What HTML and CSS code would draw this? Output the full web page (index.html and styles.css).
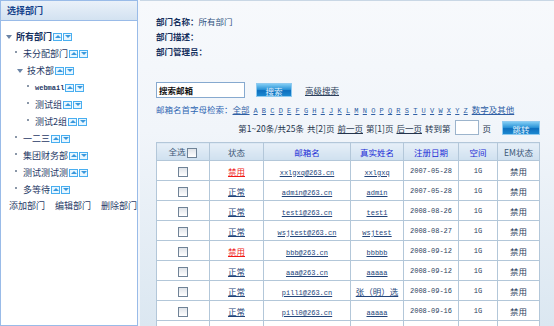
FILE: index.html
```html
<!DOCTYPE html>
<html lang="zh-CN">
<head>
    <meta charset="UTF-8">
    <title>部门邮箱管理</title>
    <link rel="stylesheet" href="styles.css">
</head>
<body>
<div class="page">
    <div class="side">
        <div class="side-head">选择部门</div>
        <ul class="tree">
            <li class="lv0"><span class="tri"></span><b>所有部门</b><span class="ud"><span class="up"></span><span class="dn"></span></span></li>
            <li class="lv1"><span class="dot"></span>未分配部门<span class="ud"><span class="up"></span><span class="dn"></span></span></li>
            <li class="lv1 open"><span class="tri"></span>技术部<span class="ud"><span class="up"></span><span class="dn"></span></span></li>
            <li class="lv2"><span class="dot"></span><span class="mono">webmail</span><span class="ud"><span class="up"></span><span class="dn"></span></span></li>
            <li class="lv2"><span class="dot"></span>测试组<span class="ud"><span class="up"></span><span class="dn"></span></span></li>
            <li class="lv2"><span class="dot"></span>测试2组<span class="ud"><span class="up"></span><span class="dn"></span></span></li>
            <li class="lv1"><span class="dot"></span>一二三<span class="ud"><span class="up"></span><span class="dn"></span></span></li>
            <li class="lv1"><span class="dot"></span>集团财务部<span class="ud"><span class="up"></span><span class="dn"></span></span></li>
            <li class="lv1"><span class="dot"></span>测试测试测<span class="ud"><span class="up"></span><span class="dn"></span></span></li>
            <li class="lv1"><span class="dot"></span>多等待<span class="ud"><span class="up"></span><span class="dn"></span></span></li>
        </ul>
        <div class="side-actions">
            <a>添加部门</a><a>编辑部门</a><a>删除部门</a>
        </div>
    </div>

    <div class="main">
        <div class="dept-info">
            <div><b>部门名称：</b>所有部门</div>
            <div><b>部门描述：</b></div>
            <div><b>部门管理员：</b></div>
        </div>

        <div class="search-bar">
            <span class="search-input">搜索邮箱</span>
            <span class="btn">搜索</span>
            <a class="adv">高级搜索</a>
        </div>

        <div class="letters">
            <span class="lbl">邮箱名首字母检索：</span><a>全部</a>
            <span class="abc"><a>A</a> <a>B</a> <a>C</a> <a>D</a> <a>E</a> <a>F</a> <a>G</a> <a>H</a> <a>I</a> <a>J</a> <a>K</a> <a>L</a> <a>M</a> <a>N</a> <a>O</a> <a>P</a> <a>Q</a> <a>R</a> <a>S</a> <a>T</a> <a>U</a> <a>V</a> <a>W</a> <a>X</a> <a>Y</a> <a>Z</a></span>
            <a>数字及其他</a>
        </div>

        <div class="pager">
            <span>第1~20条/共25条</span>
            <span>共[2]页</span>
            <a>前一页</a>
            <span>第[1]页</span>
            <a>后一页</a>
            <span>转到第</span>
            <span class="page-input"></span>
            <span>页</span>
            <span class="btn go">跳转</span>
        </div>

        <table class="mail-table">
            <colgroup>
                <col style="width:53px"><col style="width:54px"><col style="width:87px"><col style="width:53px"><col style="width:55px"><col style="width:39px"><col style="width:42px">
            </colgroup>
            <thead>
                <tr>
                    <th class="gray">全选 <span class="cb"></span></th>
                    <th class="gray">状态</th>
                    <th>邮箱名</th>
                    <th>真实姓名</th>
                    <th>注册日期</th>
                    <th>空间</th>
                    <th class="gray">EM状态</th>
                </tr>
            </thead>
            <tbody>
                <tr><td><span class="cb"></span></td><td><a class="red">禁用</a></td><td><a class="mono">xxlgxq@263.cn</a></td><td><a class="mono">xxlgxq</a></td><td class="mono">2007-05-28</td><td class="mono">1G</td><td>禁用</td></tr>
                <tr><td><span class="cb"></span></td><td><a>正常</a></td><td><a class="mono">admin@263.cn</a></td><td><a class="mono">admin</a></td><td class="mono">2007-05-28</td><td class="mono">1G</td><td>禁用</td></tr>
                <tr><td><span class="cb"></span></td><td><a>正常</a></td><td><a class="mono">test1@263.cn</a></td><td><a class="mono">test1</a></td><td class="mono">2008-08-26</td><td class="mono">1G</td><td>禁用</td></tr>
                <tr><td><span class="cb"></span></td><td><a>正常</a></td><td><a class="mono">wsjtest@263.cn</a></td><td><a class="mono">wsjtest</a></td><td class="mono">2008-08-27</td><td class="mono">1G</td><td>禁用</td></tr>
                <tr><td><span class="cb"></span></td><td><a class="red">禁用</a></td><td><a class="mono">bbb@263.cn</a></td><td><a class="mono">bbbbb</a></td><td class="mono">2008-09-12</td><td class="mono">1G</td><td>禁用</td></tr>
                <tr><td><span class="cb"></span></td><td><a>正常</a></td><td><a class="mono">aaa@263.cn</a></td><td><a class="mono">aaaaa</a></td><td class="mono">2008-09-12</td><td class="mono">1G</td><td>禁用</td></tr>
                <tr><td><span class="cb"></span></td><td><a>正常</a></td><td><a class="mono">pill1@263.cn</a></td><td><a>张（明）选</a></td><td class="mono">2008-09-16</td><td class="mono">1G</td><td>禁用</td></tr>
                <tr><td><span class="cb"></span></td><td><a>正常</a></td><td><a class="mono">pill0@263.cn</a></td><td><a class="mono">aaaaa</a></td><td class="mono">2008-09-16</td><td class="mono">1G</td><td>禁用</td></tr>
                <tr><td><span class="cb"></span></td><td><a>正常</a></td><td><a class="mono">pill2@263.cn</a></td><td><a class="mono">aaaaa</a></td><td class="mono">2008-09-16</td><td class="mono">1G</td><td>禁用</td></tr>
            </tbody>
        </table>
    </div>
</div>
</body>
</html>
```

FILE: styles.css
```css
html, body {
    margin: 0;
    padding: 0;
}

body {
    width: 554px;
    height: 326px;
    overflow: hidden;
    font-family: "Noto Sans CJK SC", "Liberation Sans", sans-serif;
    font-size: 9px;
    color: #1f3a66;
    background: #f4f7fb;
}

a {
    color: #23457a;
    text-decoration: underline;
    cursor: pointer;
}

.mono {
    font-family: "Liberation Mono", "Noto Sans CJK SC", monospace;
    font-size: 7px;
}

.page {
    display: flex;
    height: 326px;
}

/* left panel */
.side {
    width: 136px;
    flex: none;
    border: 1px solid #99bbe8;
    background: #fff;
}

.side-head {
    height: 19px;
    line-height: 19px;
    padding-left: 6px;
    font-weight: bold;
    color: #15428b;
    background: linear-gradient(#eaf1f9, #d3e2f1);
    border-bottom: 1px solid #99bbe8;
}

.tree {
    list-style: none;
    margin: 7px 0 0;
    padding: 0;
}

.tree li {
    height: 17px;
    display: flex;
    align-items: center;
    color: #1f3a66;
}

.tree .lv0 { padding-left: 5px; }
.tree .lv1 { padding-left: 14px; }
.tree .lv1.open { padding-left: 16px; }
.tree .lv2 { padding-left: 26px; }

.tree b {
    color: #15305e;
}

.tree .mono {
    font-weight: bold;
}

.tri {
    width: 0;
    height: 0;
    border-left: 3px solid transparent;
    border-right: 3px solid transparent;
    border-top: 4px solid #6b84a6;
    margin-right: 4px;
}

.dot {
    width: 2px;
    height: 2px;
    background: #8a97a8;
    margin: 0 6px 4px 0;
}

.ud {
    display: inline-flex;
    gap: 1px;
    margin-left: 1px;
}

.up, .dn {
    width: 7px;
    height: 6px;
    border: 1px solid #48aef0;
    background: #e8f6ff;
    display: inline-flex;
    align-items: center;
    justify-content: center;
}

.up::after, .dn::after {
    content: "";
    width: 0;
    height: 0;
    border-left: 3px solid transparent;
    border-right: 3px solid transparent;
}

.up::after { border-bottom: 3px solid #3a98dc; }
.dn::after { border-top: 3px solid #3a98dc; }

.side-actions {
    display: flex;
    gap: 10px;
    padding: 1px 0 0 8px;
}

.side-actions a {
    color: #1f3a66;
    text-decoration: none;
}

/* right area */
.main {
    flex: 1;
    margin-left: 2px;
    padding: 0 14px 0 16px;
    font-size: 8.5px;
    border-top: 1px solid #c9d7e5;
    background: linear-gradient(180deg, #f7f9fc 0%, #f1f5fa 40%, #dbe7f1 100%);
}

.main .mono {
    font-size: 7px;
}

.dept-info {
    padding-top: 13px;
    line-height: 15px;
    color: #30527f;
}

.dept-info b {
    color: #15305e;
}

.search-bar {
    display: flex;
    align-items: center;
    margin-top: 23px;
}

.search-input {
    width: 85px;
    height: 14px;
    line-height: 14px;
    padding-left: 2px;
    border: 1px solid #86a9cf;
    background: #fff;
    color: #111;
    font-weight: bold;
}

.btn {
    display: inline-block;
    width: 36px;
    height: 14px;
    line-height: 14px;
    text-align: center;
    color: #e4f4ff;
    border: 1px solid #8fcaf0;
    box-sizing: border-box;
    background: linear-gradient(#7fcbf3, #2c94d8 45%, #0d6fbe 55%, #1c88d0);
}

.search-bar .btn {
    margin-left: 11px;
}

.adv {
    margin-left: 13px;
    color: #2c3f5c;
}

.letters {
    margin-top: 4px;
    height: 14px;
    line-height: 14px;
    white-space: nowrap;
}

.letters .lbl {
    color: #2f66b3;
}

.letters a {
    color: #2f5fa5;
}

.abc {
    font-family: "Liberation Mono", monospace;
    font-size: 7px;
    margin-left: 2px;
    margin-right: 2px;
}

.pager {
    display: flex;
    justify-content: flex-end;
    align-items: center;
    gap: 3px;
    margin-top: 4px;
    height: 15px;
    color: #24344c;
}

.pager a {
    color: #24344c;
}

.page-input {
    width: 22px;
    height: 13px;
    border: 1px solid #9cb4cc;
    background: #fff;
    margin-left: 2px;
}

.pager .go {
    width: 38px;
    margin-left: 8px;
}

/* table */
.mail-table {
    margin-top: 7px;
    width: 383px;
    border-collapse: collapse;
    table-layout: fixed;
    background: #fff;
}

.mail-table th,
.mail-table td {
    border: 1px solid #b3c7d9;
    text-align: center;
    padding: 0;
    white-space: nowrap;
    overflow: hidden;
}

.mail-table th {
    height: 17px;
    font-weight: normal;
    color: #1a2bd6;
    background: linear-gradient(#e6eff8, #cfe0ef);
}

.mail-table th.gray {
    color: #3e5878;
}

.mail-table td {
    height: 19px;
    color: #2c3e5c;
}

.mail-table td a {
    color: #23457a;
}

.mail-table td a.red {
    color: #f01818;
}

.cb {
    display: inline-block;
    width: 8px;
    height: 8px;
    border: 1px solid #6f8296;
    background: linear-gradient(#dfe3e8, #ffffff);
    vertical-align: middle;
}
```
